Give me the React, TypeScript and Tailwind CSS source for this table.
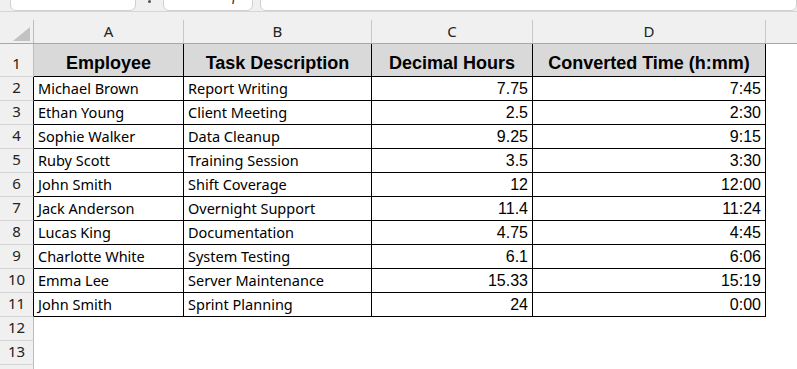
import { Check, ChevronDown, X } from 'lucide-react'

type Row = { employee: string; task: string; hours: string; time: string }

const ROWS: Row[] = [
  { employee: 'Michael Brown', task: 'Report Writing', hours: '7.75', time: '7:45' },
  { employee: 'Ethan Young', task: 'Client Meeting', hours: '2.5', time: '2:30' },
  { employee: 'Sophie Walker', task: 'Data Cleanup', hours: '9.25', time: '9:15' },
  { employee: 'Ruby Scott', task: 'Training Session', hours: '3.5', time: '3:30' },
  { employee: 'John Smith', task: 'Shift Coverage', hours: '12', time: '12:00' },
  { employee: 'Jack Anderson', task: 'Overnight Support', hours: '11.4', time: '11:24' },
  { employee: 'Lucas King', task: 'Documentation', hours: '4.75', time: '4:45' },
  { employee: 'Charlotte White', task: 'System Testing', hours: '6.1', time: '6:06' },
  { employee: 'Emma Lee', task: 'Server Maintenance', hours: '15.33', time: '15:19' },
  { employee: 'John Smith', task: 'Sprint Planning', hours: '24', time: '0:00' },
]

const uiFont = "font-['Noto_Sans',sans-serif]"
const textCell = `flex items-end overflow-hidden whitespace-nowrap border-r border-b border-black px-[4px] pb-[5px] text-[14.5px] leading-none text-black ${uiFont}`
const numCell =
  "flex items-end justify-end overflow-hidden whitespace-nowrap border-r border-b border-black px-[4px] pb-[3px] text-[16px] leading-none text-black font-['Liberation_Sans',Arial,sans-serif]"
const headCell =
  "flex items-end justify-center border-r border-b border-black bg-[#d9d9d9] pb-[4px] text-[18px] leading-none font-bold text-black font-['Liberation_Sans',Arial,sans-serif]"

function RowHeader({ n, inTable }: { n: number; inTable?: boolean }) {
  return (
    <div
      className={`flex w-[34px] shrink-0 items-end justify-center border-r border-b bg-[#f0f0f0] pb-[5px] text-[15px] leading-none text-[#222] ${uiFont} ${
        inTable ? 'border-r-black border-b-[#d4d4d4]' : 'border-r-[#bdbdbd] border-b-[#d4d4d4]'
      }`}
    >
      {n}
    </div>
  )
}

function FormulaBar() {
  return (
    <div className="flex h-[12px] items-end overflow-hidden border-b border-[#d6d6d6]">
      <div className="ml-[10px] flex h-[32px] w-[126px] shrink-0 items-end justify-between rounded-md border border-[#d1d1d1] bg-white px-[6px] pb-[9px]">
        <span className={`text-[15px] leading-none text-[#333] ${uiFont}`}>H7</span>
        <ChevronDown size={14} className="mb-[-1px] text-[#444]" />
      </div>
      <div className="flex w-[27px] shrink-0 flex-col items-center pb-[8px]">
        <span className="h-[3px] w-[3px] rounded-full bg-[#555]" />
      </div>
      <div className="flex h-[32px] w-[90px] shrink-0 items-end gap-[14px] rounded-md border border-[#d1d1d1] bg-white pb-[7px] pl-[8px]">
        <X size={16} className="text-[#c4c4c4]" strokeWidth={1.5} />
        <Check size={16} className="text-[#c4c4c4]" strokeWidth={1.5} />
        <span className="font-['Liberation_Serif',serif] text-[16px] leading-none text-[#333] italic">fx</span>
      </div>
      <div className="ml-[7px] h-[32px] flex-1 rounded-md border border-[#d1d1d1] bg-white" />
    </div>
  )
}

function ColumnHeaders() {
  const cols = [
    { label: 'A', w: 'w-[150px]' },
    { label: 'B', w: 'w-[188px]' },
    { label: 'C', w: 'w-[161px]' },
    { label: 'D', w: 'w-[233px]' },
  ]
  return (
    <div className={`flex h-[24px] border-b border-[#a8a8a8] bg-[#f0f0f0] ${uiFont}`}>
      <div className="flex w-[34px] shrink-0 items-end justify-end border-r border-[#bdbdbd] pr-[3px] pb-[2px]">
        <svg width="17" height="14" viewBox="0 0 17 14">
          <path d="M17 0 L17 14 L0 14 Z" fill="#c2c2c2" />
        </svg>
      </div>
      {cols.map((c) => (
        <div
          key={c.label}
          className={`flex shrink-0 items-end justify-center border-r border-[#c8c8c8] pb-[4px] text-[15px] leading-none text-[#222] ${c.w}`}
        >
          {c.label}
        </div>
      ))}
      <div className="flex-1" />
    </div>
  )
}

export default function App() {
  return (
    <div className="h-[369px] w-[797px] overflow-hidden bg-white">
      <div className="bg-[#f0f0f0] pb-[8px]">
        <FormulaBar />
      </div>
      <ColumnHeaders />

      <div className="flex h-[33px]">
        <RowHeader n={1} />
        <div className={`${headCell} w-[150px]`}>Employee</div>
        <div className={`${headCell} w-[188px]`}>Task Description</div>
        <div className={`${headCell} w-[161px]`}>Decimal Hours</div>
        <div className={`${headCell} w-[233px]`}>Converted Time (h:mm)</div>
      </div>

      {ROWS.map((r, i) => (
        <div key={i} className="flex h-[24px]">
          <RowHeader n={i + 2} inTable />
          <div className={`${textCell} w-[150px]`}>{r.employee}</div>
          <div className={`${textCell} w-[188px]`}>{r.task}</div>
          <div className={`${numCell} w-[161px]`}>{r.hours}</div>
          <div className={`${numCell} w-[233px]`}>{r.time}</div>
        </div>
      ))}

      {[12, 13, 14].map((n) => (
        <div key={n} className="flex h-[24px]">
          <RowHeader n={n} />
        </div>
      ))}
    </div>
  )
}
